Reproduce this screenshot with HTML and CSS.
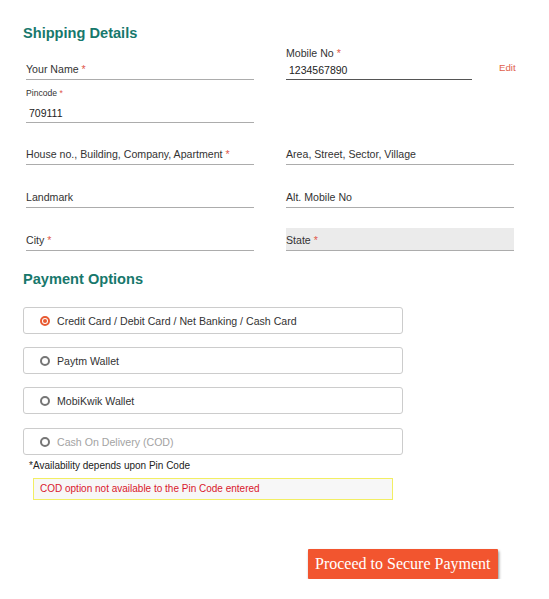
FILE: index.html
```html
<!DOCTYPE html>
<html>
<head>
<meta charset="utf-8">
<link rel="stylesheet" href="styles.css">
</head>
<body>
<div class="page">
  <h2 class="heading">Shipping Details</h2>
  <div class="fields">
    <div class="field"><span class="label">Your Name <span class="req">*</span></span></div>
    <div class="mobile-cell">
      <div class="field field-value field-dark mobile">
        <span class="label label-top">Mobile No <span class="req">*</span></span>
        <span class="value">1234567890</span>
      </div>
      <span class="edit">Edit</span>
    </div>

    <div class="field field-value">
      <span class="label label-small">Pincode <span class="req">*</span></span>
      <span class="value">709111</span>
    </div>
    <div class="empty"></div>

    <div class="field"><span class="label">House no., Building, Company, Apartment <span class="req">*</span></span></div>
    <div class="field"><span class="label">Area, Street, Sector, Village</span></div>

    <div class="field"><span class="label">Landmark</span></div>
    <div class="field"><span class="label">Alt. Mobile No</span></div>

    <div class="field"><span class="label">City <span class="req">*</span></span></div>
    <div class="field state"><span class="label">State <span class="req">*</span></span></div>
  </div>

  <h2 class="heading heading-pay">Payment Options</h2>
  <div class="options">
    <div class="opt"><span class="radio radio-on"></span><span>Credit Card / Debit Card / Net Banking / Cash Card</span></div>
    <div class="opt"><span class="radio"></span><span>Paytm Wallet</span></div>
    <div class="opt"><span class="radio"></span><span>MobiKwik Wallet</span></div>
    <div class="opt opt-disabled"><span class="radio"></span><span>Cash On Delivery (COD)</span></div>
  </div>
  <div class="note">*Availability depends upon Pin Code</div>
  <div class="error">COD option not available to the Pin Code entered</div>
  <div class="actions">
    <button class="proceed">Proceed to Secure Payment</button>
  </div>
</div>
</body>
</html>
```

FILE: styles.css
```css
html, body {
  margin: 0;
  padding: 0;
  background: #ffffff;
}

.page {
  padding: 24px 0 0 23px;
  font-family: "Liberation Sans", Arial, sans-serif;
  color: #333333;
}

.heading {
  margin: 0;
  font-size: 14.6px;
  line-height: 18px;
  font-weight: bold;
  color: #17786c;
}

.heading-pay {
  margin-top: 19px;
}

.fields {
  display: grid;
  grid-template-columns: 228px 228px;
  grid-template-rows: 38px 43px 42px 43px 43px;
  column-gap: 32px;
  margin-left: 3px;
}

.field {
  display: flex;
  flex-direction: column;
  justify-content: flex-end;
  box-sizing: border-box;
  border-bottom: 1px solid #acacac;
  padding-bottom: 3px;
}

.field-value {
  padding-bottom: 2px;
}

.field-dark {
  border-bottom-color: #555555;
}

.label {
  font-size: 10.6px;
  line-height: 13px;
  color: #333333;
}

.label-top {
  margin-bottom: 4px;
}

.label-small {
  font-size: 8.6px;
  line-height: 11px;
  margin-bottom: 8px;
}

.req {
  color: #e0574a;
}

.value {
  font-size: 10.5px;
  line-height: 13px;
  padding-left: 3px;
  color: #222222;
}

.mobile-cell {
  display: flex;
  align-items: flex-end;
}

.mobile {
  flex: none;
  width: 186px;
  height: 100%;
}

.edit {
  flex: none;
  margin-left: 27px;
  margin-bottom: 6px;
  font-size: 9.7px;
  line-height: 12px;
  color: #e0604c;
}

.state {
  align-self: end;
  height: 23px;
  background: #ebebeb;
}

.options {
  margin-top: 19px;
  display: flex;
  flex-direction: column;
  gap: 13px;
}

.opt {
  width: 380px;
  height: 27px;
  box-sizing: border-box;
  border: 1px solid #cccccc;
  border-radius: 3px;
  display: flex;
  align-items: center;
  padding-left: 16px;
  font-size: 10.6px;
  color: #333333;
}

.opt-disabled {
  margin-top: 1px;
  color: #a3a3a3;
}

.radio {
  width: 10px;
  height: 10px;
  box-sizing: border-box;
  border: 2px solid #767676;
  border-radius: 50%;
  margin-right: 7px;
  position: relative;
  flex: none;
}

.radio-on {
  border-color: #e85a32;
}

.radio-on::after {
  content: "";
  position: absolute;
  left: 1px;
  top: 1px;
  width: 4px;
  height: 4px;
  border-radius: 50%;
  background: #e85a32;
}

.note {
  margin: 5px 0 0 6px;
  font-size: 10px;
  line-height: 12px;
  color: #222222;
}

.error {
  margin: 6px 0 0 10px;
  width: 360px;
  height: 22px;
  box-sizing: border-box;
  border: 1px solid #f2ee63;
  background: #f7f7f7;
  padding-left: 6px;
  font-size: 10px;
  line-height: 20px;
  color: #d9172c;
}

.actions {
  display: flex;
  margin-top: 49px;
  padding-left: 285px;
}

.proceed {
  height: 30px;
  padding: 0 7px;
  border: none;
  border-radius: 1px;
  background: #f2552f;
  color: #ffffff;
  font-family: "Liberation Serif", "Times New Roman", serif;
  font-size: 16px;
  line-height: 30px;
  box-shadow: 1px 2px 3px rgba(0, 0, 0, 0.45);
  cursor: pointer;
}
```
